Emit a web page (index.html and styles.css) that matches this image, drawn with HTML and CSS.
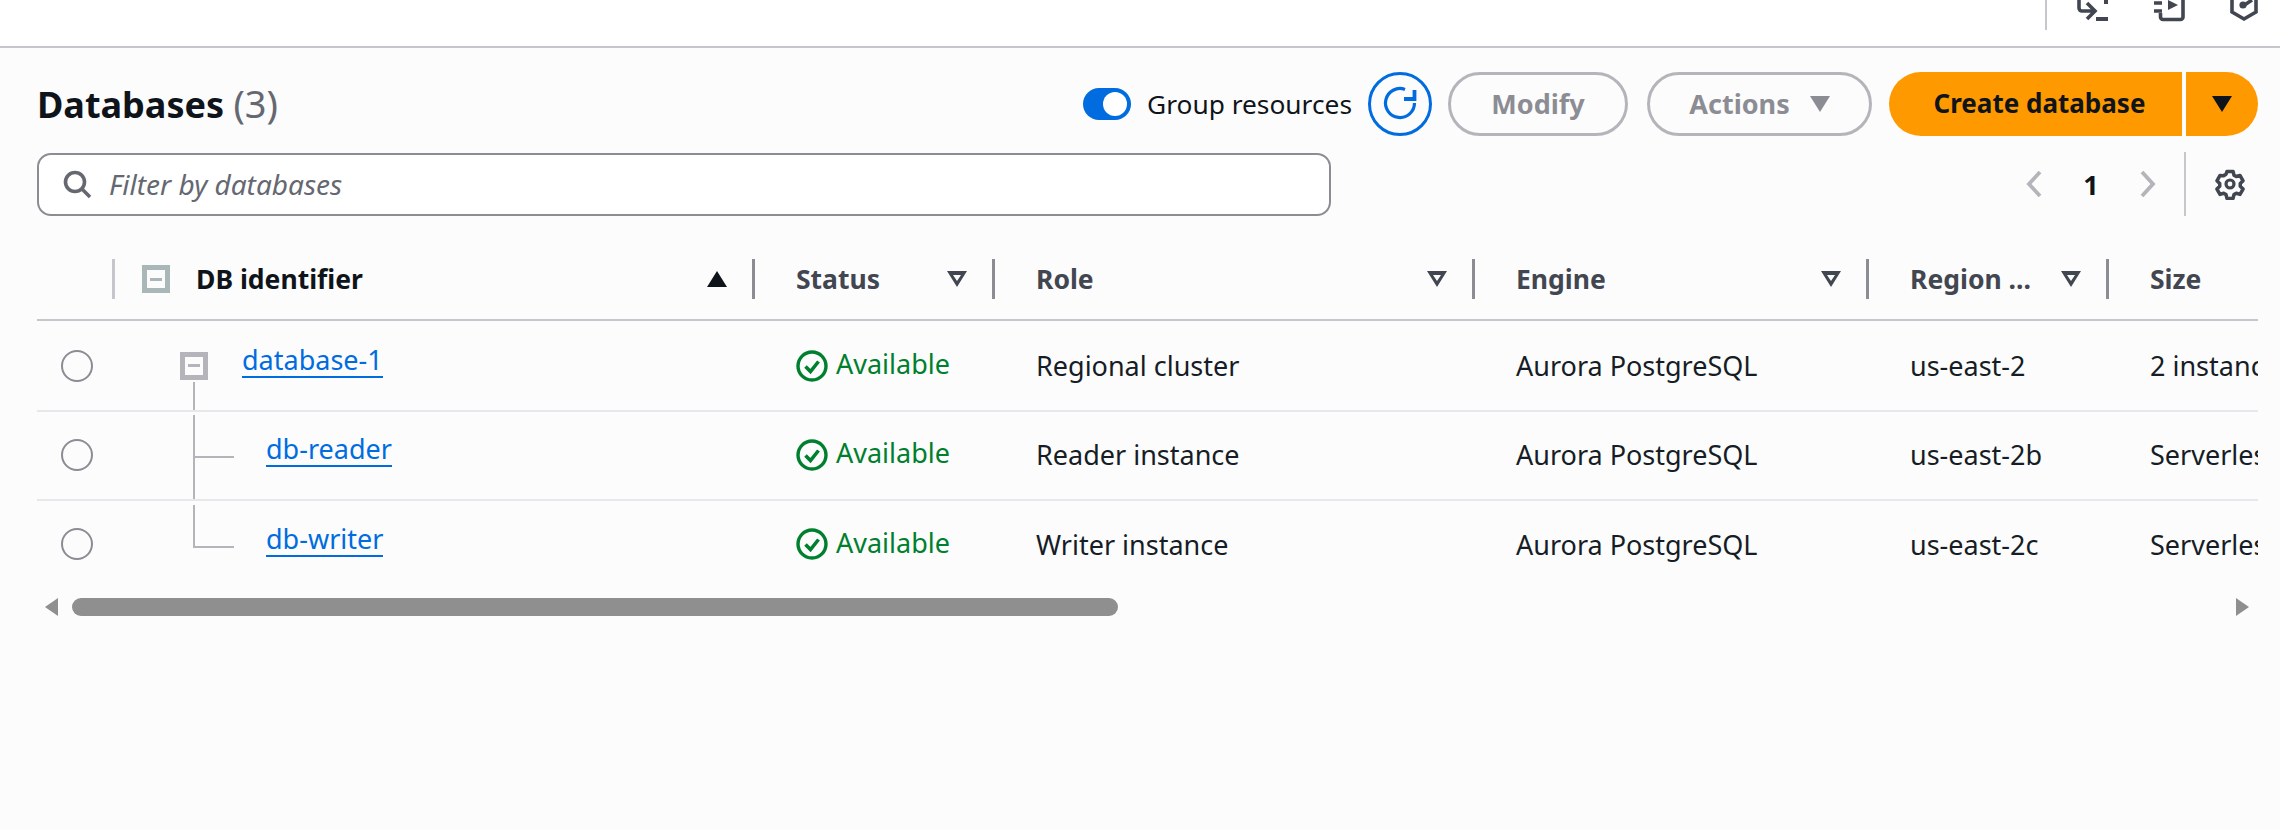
FILE: index.html
```html
<!DOCTYPE html>
<html lang="en">
<head>
    <meta charset="UTF-8">
    <title>Databases</title>
    <link rel="stylesheet" href="styles.css">
</head>
<body>
    <div class="topbar">
        <span class="topbar-divider"></span>
        <svg class="top-icon icon-a" viewBox="0 0 34 22"><path d="M3 0v8a3 3 0 0 0 3 3h13M11 3l8 8-8 8" fill="none" stroke="#424650" stroke-width="3.6"/><path d="M20 17h12v4H20zM28 0h4v4h-4z" fill="#424650"/></svg>
        <svg class="top-icon icon-b" viewBox="0 0 32 22"><path d="M29 0v17a2.5 2.5 0 0 1-2.5 2.5H9A2.5 2.5 0 0 1 6.5 17v-4M0 3h8M0 11h8" fill="none" stroke="#424650" stroke-width="3.6"/><path d="M14 0l10 5-10 5z" fill="#424650"/></svg>
        <svg class="top-icon icon-c" viewBox="0 0 28 22"><path d="M2 0v12l12 7 12-7V0M13 6l9-6" fill="none" stroke="#424650" stroke-width="3.6"/><circle cx="13" cy="5" r="3.6" fill="#424650"/></svg>
    </div>

    <div class="container">
        <div class="header-row">
            <h2>Databases <span class="count">(3)</span></h2>
            <div class="actions">
                <span class="toggle"><span class="toggle-knob"></span></span>
                <span class="toggle-label">Group resources</span>
                <button class="btn btn-icon">
                    <svg class="refresh" viewBox="0 0 32 32" width="32" height="32"><path d="M21 1.4A14.5 14.5 0 1 0 30.5 15" fill="none" stroke="#006ce0" stroke-width="3.2"/><path d="M30.5 2v9H20" fill="none" stroke="#006ce0" stroke-width="3.8"/></svg>
                </button>
                <button class="btn btn-disabled btn-modify"><span class="btn-text">Modify</span></button>
                <button class="btn btn-disabled btn-actions"><span class="btn-text">Actions</span> <span class="caret caret-gray"></span></button>
                <div class="split">
                    <button class="btn-primary btn-create">Create database</button>
                    <button class="btn-primary btn-drop"><span class="caret"></span></button>
                </div>
            </div>
        </div>

        <div class="filter-row">
            <div class="search">
                <svg viewBox="0 0 32 32" width="32" height="32"><circle cx="14" cy="14" r="9.5" fill="none" stroke="#656871" stroke-width="3.6"/><path d="M21 21l8 8" stroke="#656871" stroke-width="3.6"/></svg>
                <span class="search-text">Filter by databases</span>
            </div>
            <div class="pager">
                <svg viewBox="0 0 16 28" width="16" height="28"><path d="M14 2L3 14l11 12" fill="none" stroke="#b4b4bb" stroke-width="3.8"/></svg>
                <span class="page-num">1</span>
                <svg viewBox="0 0 16 28" width="16" height="28"><path d="M2 2l11 12L2 26" fill="none" stroke="#b4b4bb" stroke-width="3.8"/></svg>
                <span class="pager-divider"></span>
                <svg class="gear" viewBox="0 0 32 32" width="32" height="32"><path d="M12.6 2h6.8l1 4.2 2.6 1.5 4.1-1.2 3.4 5.9-3.1 3v3.2l3.1 3-3.4 5.9-4.1-1.2-2.6 1.5-1 4.2h-6.8l-1-4.2-2.6-1.5-4.1 1.2-3.4-5.9 3.1-3v-3.2l-3.1-3 3.4-5.9L9 6.7l2.6-1.5z" transform="translate(1.6 1.6) scale(.9)" fill="none" stroke="#424650" stroke-width="3.9" stroke-linejoin="round"/><circle cx="16" cy="16" r="4" fill="none" stroke="#424650" stroke-width="3.2"/></svg>
            </div>
        </div>

        <div class="table-wrap">
            <table>
                <colgroup>
                    <col class="col-select"><col class="col-id"><col class="col-status"><col class="col-role"><col class="col-engine"><col class="col-region"><col class="col-size">
                </colgroup>
                <thead>
                    <tr>
                        <th class="th-select"></th>
                        <th class="th-id">
                            <div class="th-inner">
                                <span class="expander expander-head"></span>
                                <span class="th-title">DB identifier</span>
                                <span class="sort-up"></span>
                            </div>
                        </th>
                        <th><div class="th-inner"><span>Status</span><span class="sort-down"></span></div></th>
                        <th><div class="th-inner"><span>Role</span><span class="sort-down"></span></div></th>
                        <th><div class="th-inner"><span>Engine</span><span class="sort-down"></span></div></th>
                        <th><div class="th-inner"><span>Region ...</span><span class="sort-down"></span></div></th>
                        <th class="th-last"><div class="th-inner"><span>Size</span></div></th>
                    </tr>
                </thead>
                <tbody>
                    <tr class="first-row">
                        <td class="td-select"><span class="radio"></span></td>
                        <td class="td-id">
                            <div class="tree tree-parent">
                                <span class="expander"></span>
                                <a href="#">database-1</a>
                            </div>
                        </td>
                        <td><div class="status"><svg viewBox="0 0 32 32" width="32" height="32"><circle cx="16" cy="16" r="14" fill="none" stroke="#00802f" stroke-width="3.4"/><path d="M9.5 16.5l5 5 8-10" fill="none" stroke="#00802f" stroke-width="3.6"/></svg><span>Available</span></div></td>
                        <td>Regional cluster</td>
                        <td>Aurora PostgreSQL</td>
                        <td>us-east-2</td>
                        <td class="td-last">2 instances</td>
                    </tr>
                    <tr>
                        <td class="td-select"><span class="radio"></span></td>
                        <td class="td-id">
                            <div class="tree tree-child">
                                <span class="branch"></span>
                                <a href="#">db-reader</a>
                            </div>
                        </td>
                        <td><div class="status"><svg viewBox="0 0 32 32" width="32" height="32"><circle cx="16" cy="16" r="14" fill="none" stroke="#00802f" stroke-width="3.4"/><path d="M9.5 16.5l5 5 8-10" fill="none" stroke="#00802f" stroke-width="3.6"/></svg><span>Available</span></div></td>
                        <td>Reader instance</td>
                        <td>Aurora PostgreSQL</td>
                        <td>us-east-2b</td>
                        <td class="td-last">Serverless</td>
                    </tr>
                    <tr class="last-row">
                        <td class="td-select"><span class="radio"></span></td>
                        <td class="td-id">
                            <div class="tree tree-child">
                                <span class="branch branch-end"></span>
                                <a href="#">db-writer</a>
                            </div>
                        </td>
                        <td><div class="status"><svg viewBox="0 0 32 32" width="32" height="32"><circle cx="16" cy="16" r="14" fill="none" stroke="#00802f" stroke-width="3.4"/><path d="M9.5 16.5l5 5 8-10" fill="none" stroke="#00802f" stroke-width="3.6"/></svg><span>Available</span></div></td>
                        <td>Writer instance</td>
                        <td>Aurora PostgreSQL</td>
                        <td>us-east-2c</td>
                        <td class="td-last">Serverless</td>
                    </tr>
                </tbody>
            </table>
        </div>

        <div class="scrollbar">
            <span class="arrow-left"></span>
            <span class="thumb"></span>
            <span class="arrow-right"></span>
        </div>
    </div>
</body>
</html>
```
FILE: styles.css
```css
* {
    box-sizing: border-box;
}
html, body {
    height: 100%;
}
body {
    margin: 0;
    overflow: hidden;
    font-family: "Noto Sans", "Open Sans", sans-serif;
    font-size: 27px;
    color: #0f141a;
    background-color: #fcfcfc;
}
.topbar {
    height: 48px;
    background: #fff;
    border-bottom: 2px solid #c6c6cd;
    display: flex;
    align-items: flex-start;
    justify-content: flex-end;
    gap: 44px;
    padding-right: 22px;
    overflow: hidden;
}
.topbar-divider {
    width: 2px;
    height: 30px;
    background: #c6c6cd;
    margin-right: -15px;
}
.top-icon {
    height: 22px;
    flex: none;
}
.icon-a {
    width: 34px;
}
.icon-b {
    width: 32px;
}
.icon-c {
    width: 28px;
}
.container {
    padding: 24px 22px 0 37px;
}
.header-row {
    display: flex;
    justify-content: space-between;
    align-items: center;
    height: 64px;
}
h2 {
    margin: 0;
    font-size: 36px;
    font-weight: 700;
    line-height: 44px;
}
.count {
    font-size: 38px;
    font-weight: 400;
    color: #656871;
}
.actions {
    display: flex;
    align-items: center;
}
.toggle {
    width: 48px;
    height: 32px;
    border-radius: 16px;
    background: #006ce0;
    display: flex;
    align-items: center;
    justify-content: flex-end;
    padding-right: 4px;
}
.toggle-knob {
    width: 24px;
    height: 24px;
    border-radius: 50%;
    background: #fff;
}
.toggle-label {
    font-size: 26.3px;
    margin-left: 16px;
    margin-right: 16px;
}
.btn {
    height: 64px;
    border-radius: 32px;
    background: transparent;
    font-family: inherit;
    font-size: 27px;
    font-weight: 700;
    display: flex;
    align-items: center;
    justify-content: center;
    padding: 0;
}
.btn-text {
    margin-top: -2px;
}
.btn-icon {
    width: 64px;
    border: 3px solid #006ce0;
    margin-right: 16px;
}
.refresh {
    overflow: visible;
}
.btn-disabled {
    border: 3px solid #b4b4bb;
    color: #8c8c94;
}
.btn-modify {
    width: 180px;
    margin-right: 19px;
}
.btn-actions {
    width: 225px;
    margin-right: 17px;
    gap: 20px;
}
.caret {
    width: 0;
    height: 0;
    border-left: 10px solid transparent;
    border-right: 10px solid transparent;
    border-top: 16px solid #0f141a;
}
.caret-gray {
    border-top-color: #8c8c94;
}
.split {
    display: flex;
    gap: 4px;
}
.btn-primary {
    height: 64px;
    width: 293px;
    border: 0;
    border-radius: 32px 0 0 32px;
    background: #ff9900;
    color: #0f141a;
    font-family: inherit;
    font-size: 26px;
    font-weight: 700;
    padding: 0;
}
.btn-create {
    padding: 0 0 2px 8px;
}
.btn-drop {
    width: 72px;
    border-radius: 0 32px 32px 0;
    display: flex;
    align-items: center;
    justify-content: center;
}
.filter-row {
    display: flex;
    justify-content: space-between;
    align-items: center;
    margin-top: 16px;
    height: 64px;
}
.search {
    width: 1294px;
    height: 63px;
    background: #fff;
    border: 2px solid #8c8c94;
    border-radius: 14px;
    display: flex;
    align-items: center;
    gap: 16px;
    padding-left: 22px;
}
.search-text {
    font-style: italic;
    font-size: 28px;
    color: #656871;
}
.pager {
    display: flex;
    align-items: center;
    height: 64px;
}
.page-num {
    font-weight: 700;
    width: 98px;
    text-align: center;
}
.pager-divider {
    width: 2px;
    height: 64px;
    background: #c6c6cd;
    margin-left: 28px;
    margin-right: 28px;
}
.gear {
    margin-right: 12px;
}
.table-wrap {
    overflow: hidden;
    margin-top: 23px;
}
table {
    border-collapse: collapse;
    table-layout: fixed;
    width: 2400px;
}
.col-select { width: 78px; }
.col-id { width: 640px; }
.col-status { width: 240px; }
.col-role { width: 480px; }
.col-engine { width: 394px; }
.col-region { width: 240px; }
.col-size { width: 328px; }
th {
    height: 81px;
    padding: 0 28px 0 41px;
    border-bottom: 2px solid #c6c6cd;
    text-align: left;
    font-size: 26.5px;
    font-weight: 700;
    color: #424650;
    position: relative;
}
th::after {
    content: "";
    position: absolute;
    right: 0;
    top: 20px;
    width: 3px;
    height: 40px;
    background: #8c8c94;
}
.th-select::after {
    background: #c6c6cd;
}
.th-last::after {
    display: none;
}
.th-inner {
    display: flex;
    align-items: center;
    justify-content: space-between;
}
.th-id {
    padding-left: 27px;
    color: #0f141a;
}
.th-title {
    margin-left: 26px;
    margin-right: auto;
}
.expander {
    flex: none;
    width: 28px;
    height: 28px;
    border: 5px solid #b4b4bb;
    display: flex;
    align-items: center;
    justify-content: center;
}
.expander::before {
    content: "";
    width: 12px;
    height: 3px;
    background: #b4b4bb;
}
.expander-head {
    border-color: #aab7b8;
}
.expander-head::before {
    background: #aab7b8;
}
.sort-up {
    width: 0;
    height: 0;
    border-left: 10px solid transparent;
    border-right: 10px solid transparent;
    border-bottom: 16px solid #0f141a;
}
.sort-down {
    flex: none;
    width: 20px;
    height: 16px;
    background: #424650;
    clip-path: polygon(0 0, 100% 0, 50% 100%, 50% 62%, 70% 25%, 30% 25%, 50% 62%, 50% 100%);
}
td {
    height: 89px;
    padding: 0 0 2px 41px;
    border-bottom: 2px solid #e8e8ec;
    white-space: nowrap;
    overflow: hidden;
    color: #161d26;
}
.first-row td {
    height: 91px;
    padding-bottom: 0;
}
.last-row td {
    border-bottom: 0;
}
td.td-select {
    padding-left: 24px;
}
.radio {
    display: block;
    width: 32px;
    height: 32px;
    border: 2px solid #8c8c94;
    border-radius: 50%;
}
td.td-id {
    padding: 0;
}
.tree {
    height: 87px;
    display: flex;
    align-items: center;
}
.tree-parent {
    padding-left: 65px;
    gap: 34px;
    position: relative;
}
.tree-parent a {
    margin-top: -10px;
}
.tree-parent::after {
    content: "";
    position: absolute;
    left: 78px;
    top: 60px;
    width: 2px;
    height: 30px;
    background: #b4b4bb;
}
.tree-child {
    padding-left: 78px;
}
.branch {
    flex: none;
    width: 41px;
    height: 100%;
    position: relative;
    margin-right: 32px;
}
.branch::before {
    content: "";
    position: absolute;
    left: 0;
    top: 3px;
    bottom: 0;
    width: 2px;
    background: #b4b4bb;
}
.branch::after {
    content: "";
    position: absolute;
    left: 0;
    right: 0;
    top: 44px;
    height: 2px;
    background: #b4b4bb;
}
.branch-end::before {
    bottom: 41px;
    top: 3px;
}
.tree-child a {
    margin-top: -11px;
}
a {
    color: #006ce0;
    text-decoration: none;
    border-bottom: 2px solid #006ce0;
    line-height: 32px;
}
.status {
    display: flex;
    align-items: center;
    gap: 8px;
    color: #00802f;
}
.status svg {
    flex: none;
}
.status span {
    margin-top: -4px;
}
.scrollbar {
    display: flex;
    align-items: center;
    height: 18px;
    margin-top: 9px;
    padding-left: 8px;
}
.arrow-left {
    width: 0;
    height: 0;
    border-top: 9px solid transparent;
    border-bottom: 9px solid transparent;
    border-right: 13px solid #8f8f8f;
}
.thumb {
    width: 1046px;
    height: 18px;
    background: #8f8f8f;
    border-radius: 9px;
    margin-left: 14px;
    margin-right: auto;
}
.arrow-right {
    width: 0;
    height: 0;
    border-top: 9px solid transparent;
    border-bottom: 9px solid transparent;
    border-left: 13px solid #8f8f8f;
    margin-right: 9px;
}
```
